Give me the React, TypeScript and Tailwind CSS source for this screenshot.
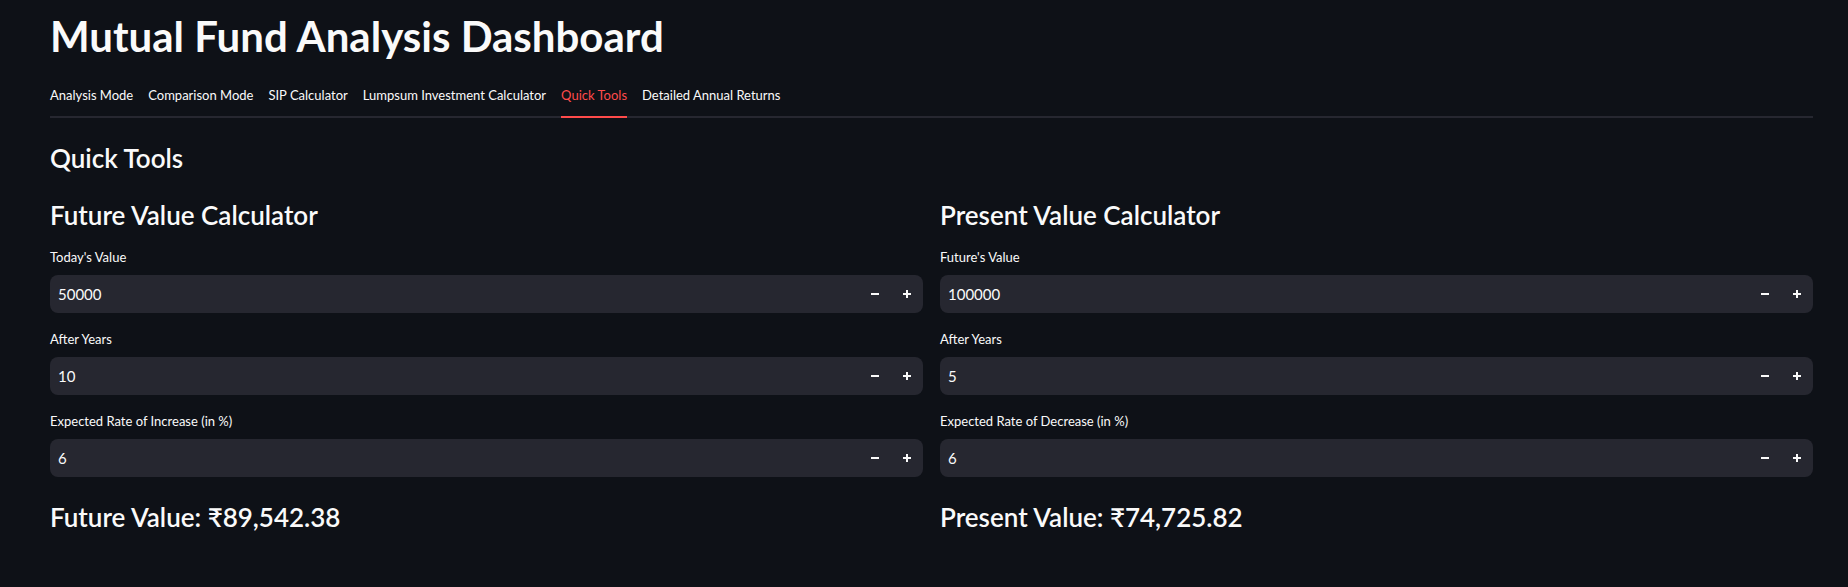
const tabs = [
  'Analysis Mode',
  'Comparison Mode',
  'SIP Calculator',
  'Lumpsum Investment Calculator',
  'Quick Tools',
  'Detailed Annual Returns',
];

interface Field {
  label: string;
  value: string;
}

interface Calculator {
  title: string;
  fields: Field[];
  result: string;
}

const calculators: Calculator[] = [
  {
    title: 'Future Value Calculator',
    fields: [
      { label: "Today's Value", value: '50000' },
      { label: 'After Years', value: '10' },
      { label: 'Expected Rate of Increase (in %)', value: '6' },
    ],
    result: 'Future Value: ₹89,542.38',
  },
  {
    title: 'Present Value Calculator',
    fields: [
      { label: "Future's Value", value: '100000' },
      { label: 'After Years', value: '5' },
      { label: 'Expected Rate of Decrease (in %)', value: '6' },
    ],
    result: 'Present Value: ₹74,725.82',
  },
];

function NumberInput({ label, value }: Field) {
  return (
    <div>
      <div className="text-[13px] leading-[20px] mb-2">{label}</div>
      <div className="flex items-center h-[38px] rounded-lg bg-[#262730]">
        <span className="flex-1 pl-2 text-[15px]">{value}</span>
        {/* step buttons */}
        <button className="w-8 h-full flex items-center justify-center">
          <svg width="10" height="10" viewBox="0 0 10 10">
            <rect x="1" y="4" width="8" height="2" fill="#fafafa" />
          </svg>
        </button>
        <button className="w-8 h-full flex items-center justify-center">
          <svg width="10" height="10" viewBox="0 0 10 10">
            <rect x="1" y="4" width="8" height="2" fill="#fafafa" />
            <rect x="4" y="1" width="2" height="8" fill="#fafafa" />
          </svg>
        </button>
      </div>
    </div>
  );
}

export default function App() {
  return (
    <div className="min-h-screen bg-[#0e1117] text-[#fafafa] font-['Lato','Noto_Sans',sans-serif]">
      <div className="pl-[50px] pr-[35px] pt-[10px]">
        <h1 className="text-[42px] leading-[52px] font-bold">Mutual Fund Analysis Dashboard</h1>

        {/* Tabs */}
        <div className="mt-[23px] flex gap-[15px] border-b-2 border-[#262730]">
          {tabs.map((tab) => (
            <div
              key={tab}
              className={
                tab === 'Quick Tools'
                  ? 'text-[13px] leading-[20px] pb-[11px] -mb-[2px] border-b-2 border-[#ff4b4b] text-[#ff4b4b]'
                  : 'text-[13px] leading-[20px] pb-[11px]'
              }
            >
              {tab}
            </div>
          ))}
        </div>

        <h3 className="mt-[22px] text-[26px] leading-[36px] font-semibold">Quick Tools</h3>

        <div className="mt-[21px] grid grid-cols-2 gap-[17px]">
          {calculators.map((calc) => (
            <div key={calc.title}>
              <h3 className="text-[26px] leading-[36px] font-semibold">{calc.title}</h3>
              <div className="mt-[14px] flex flex-col gap-4">
                {calc.fields.map((f) => (
                  <NumberInput key={f.label} label={f.label} value={f.value} />
                ))}
              </div>
              <h3 className="mt-[22px] text-[26px] leading-[36px] font-semibold">{calc.result}</h3>
            </div>
          ))}
        </div>
      </div>
    </div>
  );
}
